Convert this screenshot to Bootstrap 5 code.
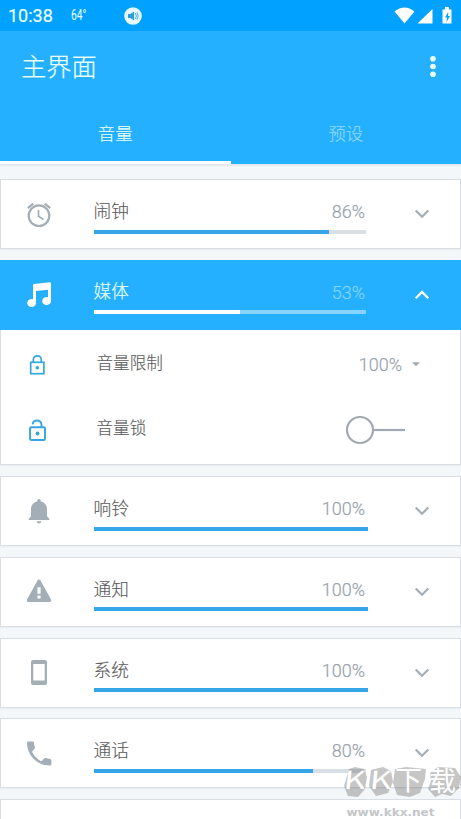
<!DOCTYPE html>
<html lang="zh-CN">
<head>
<meta charset="utf-8">
<meta name="viewport" content="width=device-width, initial-scale=1">
<title>主界面</title>
<link rel="stylesheet" href="https://cdn.jsdelivr.net/npm/bootstrap@5.3.0/dist/css/bootstrap.min.css">
<style>
body{font-family:Roboto,"Noto Sans CJK SC",sans-serif;background:#f3f7fa;color:#666;height:819px}
svg{display:block;flex:none}
.screen{height:819px}
.status-bar{height:31px;background:#00a1ff;color:#eaffff;padding:0 5px 0 8px}
.clock{font-size:18px;width:63px;font-weight:400;line-height:31px;-webkit-text-stroke:.2px}
.temp{font-size:15px;width:53px;line-height:31px}
.temp span{display:inline-block;transform:scaleX(.68);transform-origin:left}
.app-bar{height:133px;background:#25afff;color:#eaffff}
.title-row{height:72px;padding:0 24px 0 21px}
.page-title{font-size:25.3px;font-weight:300;line-height:36px;padding-top:2px;-webkit-text-stroke:.2px}
.tab-item{height:61px;font-size:17.5px;font-weight:300;line-height:63px;border-bottom:3px solid transparent;text-align:center;color:#93dcfd;-webkit-text-stroke:.15px}
.tab-item.on{color:#eaffff;border-color:#fff}
.tab-item span{display:block;height:58px}
.channels{padding-top:15px;gap:10.7px;box-shadow:inset 0 2px 1px #e3e9ee}
.panel{background:#fff;border:1px solid #d8dee3;border-width:1.5px 1px;box-shadow:0 1px 1px #e9eef1;flex:none}
.channel{height:70px;color:#a3aeb6}
.panel>.channel{margin:-1px -1px}
.icon-cell{width:93.5px;padding:1px 0 0 25px;flex:none}
.body-cell{width:272.5px;flex:none;padding-top:20px}
.caption{height:30.5px;line-height:25px}
.label{font-size:17.7px;font-weight:300;color:#5c5c5c;-webkit-text-stroke:.15px}
.caption .label{padding-top:1px}
.pct{font-size:18px;font-weight:300;color:#98a2aa;padding-right:1px;-webkit-text-stroke:.2px}
.track{height:4px;background:#d8dfe6}
.fill{height:4px;background:#36a5e8}
.chev{margin-left:48px}
.channel.active-row{background:#25afff;color:#fff}
.active-row .label{color:#eaffff;padding-top:0}
.active-row .pct{color:#83d6ff}
.active-row .track{background:#86d5ff}
.active-row .fill{background:#fff}
.options{padding:3.6px 0 2.2px}
.option{height:65px;padding-left:25px}
.option .label{font-size:16.6px;margin-left:48.5px;margin-top:-1px}
.lim{margin-left:auto;padding-right:10px}
.limit-caret{margin-right:40px}
.toggle{margin-left:auto;margin-right:54px}
.watermark{right:0;bottom:0;width:121px;height:64px}
</style>
<script src="https://cdn.jsdelivr.net/npm/bootstrap@5.3.0/dist/js/bootstrap.bundle.min.js"></script>
</head>
<body>
<div class="screen position-relative overflow-hidden d-flex flex-column">
  <div class="status-bar d-flex align-items-center flex-shrink-0">
    <span class="clock">10:38</span><span class="temp"><span>64°</span></span>
    <svg width="18" height="18" viewBox="0 0 18 18"><circle cx="9" cy="9" r="8.8" fill="#e4faff"/><path d="M4 7h2.500L10 4.500v9L6.500 11H4z" fill="#2b9ee0"/><path d="M11.400 6.200q2 2.800 0 5.600M13 5.200q2.400 3.800 0 7.600" fill="none" stroke="#4aafe4" stroke-width="1"/></svg>
    <svg class="ms-auto" width="62" height="20" viewBox="0 0 62 20" fill="#fff"><path d="M.5 5.500Q10.500-2.500 20.500 5.500L10.500 17.500z"/><path d="M23.500 17.500L38.500 3v14.500z"/><path d="M48.500 3.500h2.500V1h4v2.500h2.500V17.500h-9z"/><path d="M54.300 6l-3.300 5.500h2L52.500 16l3.500-6h-2z" fill="#00a1ff"/></svg>
  </div>
  <header class="app-bar flex-shrink-0">
    <div class="title-row d-flex align-items-center justify-content-between">
      <span class="page-title">主界面</span>
      <svg width="8" height="24" viewBox="0 0 8 24" fill="#eaffff"><circle cx="4" cy="3.700" r="2.800"/><circle cx="4" cy="11.500" r="2.800"/><circle cx="4" cy="19.300" r="2.800"/></svg>
    </div>
    <div class="row g-0">
      <div class="col-6 tab-item on"><span>音量</span></div>
      <div class="col-6 tab-item"><span>预设</span></div>
    </div>
  </header>
  <main class="channels d-flex flex-column">
    <section class="panel">
      <div class="channel d-flex align-items-center">
        <div class="icon-cell"><svg width="28" height="28" viewBox="0 0 28 28" fill="none" stroke="currentColor" stroke-width="2.200"><circle cx="14" cy="14.700" r="10.300"/><path d="M2.800 7.200L8.300 2.600M19.700 2.600L25.200 7.200"/><path d="M13.500 9v6.300l5 3.200" stroke-width="1.700"/></svg></div>
        <div class="body-cell align-self-start"><div class="caption d-flex justify-content-between"><span class="label">闹钟</span><span class="pct">86%</span></div><div class="track"><div class="fill" style="width:86.300%"></div></div></div>
        <svg class="chev" width="16" height="10" viewBox="0 0 16 10" fill="none" stroke="currentColor" stroke-width="2.200"><path d="M1.700 1.500L8 7.800l6.300-6.300"/></svg>
      </div>
    </section>
    <section class="panel">
      <div class="channel active-row d-flex align-items-center">
        <div class="icon-cell"><svg width="28" height="28" viewBox="0 0 28 28" fill="currentColor"><path d="M8 4.300Q8 3.200 9 3L24.500 1.300q1.500 0 1.500 1.300V20a4.400 4 0 1 1-3-3.700V8.700L11 9.900v12a4.400 4 0 1 1-3-3.700z"/></svg></div>
        <div class="body-cell align-self-start"><div class="caption d-flex justify-content-between"><span class="label">媒体</span><span class="pct">53%</span></div><div class="track"><div class="fill" style="width:53.700%"></div></div></div>
        <svg class="chev" width="16" height="10" viewBox="0 0 16 10" fill="none" stroke="currentColor" stroke-width="2.200"><path d="M1.700 8.200L8 1.900l6.300 6.300"/></svg>
      </div>
      <div class="options">
        <div class="option d-flex align-items-center">
          <svg width="22" height="24" viewBox="0 0 22 24" fill="none" stroke="#36a5e0" stroke-width="1.700"><rect x="4.700" y="9.300" width="13.200" height="11.400"/><path d="M7.300 9V6.800a4 4 0 0 1 8 0V9"/><circle cx="11.300" cy="14.800" r="1.800" fill="#36a5e0" stroke="none"/></svg>
          <span class="label">音量限制</span><span class="pct lim">100%</span>
          <svg class="limit-caret" width="8" height="5" viewBox="0 0 8 5"><path d="M0 .3h8L4 4.300z" fill="#a0a9b2"/></svg>
        </div>
        <div class="option d-flex align-items-center">
          <svg width="22" height="24" viewBox="0 0 22 24" fill="none" stroke="#36a5e0" stroke-width="1.900"><rect x="4" y="9.300" width="15" height="12.700" rx="1.300"/><path d="M6.600 6.300a4.500 4.500 0 0 1 8.900 0v3"/><circle cx="11.500" cy="15.500" r="1.900" fill="#36a5e0" stroke="none"/></svg>
          <span class="label">音量锁</span>
          <svg class="toggle" width="61" height="30" viewBox="0 0 61 30" fill="none" stroke="#a0a9b2" stroke-width="2.200"><circle cx="15" cy="15" r="13"/><path d="M28 15h32"/></svg>
        </div>
      </div>
    </section>
    <section class="panel">
      <div class="channel d-flex align-items-center">
        <div class="icon-cell"><svg width="28" height="28" viewBox="0 0 28 28" fill="currentColor"><path d="M14 1q1.800 0 1.900 2.400c4.200 1 6.100 4 6.100 8.100v6.800l2.300 2.500V22H3.700v-1.200L6 18.300v-6.800c0-4.100 1.900-7.100 6.100-8.100Q12.200 1 14 1zM11.700 23.300h4.600a2.300 2.200 0 0 1-4.600 0z"/></svg></div>
        <div class="body-cell align-self-start"><div class="caption d-flex justify-content-between"><span class="label">响铃</span><span class="pct">100%</span></div><div class="track"><div class="fill" style="width:100.600%"></div></div></div>
        <svg class="chev" width="16" height="10" viewBox="0 0 16 10" fill="none" stroke="currentColor" stroke-width="2.200"><path d="M1.700 1.500L8 7.800l6.300-6.300"/></svg>
      </div>
    </section>
    <section class="panel">
      <div class="channel d-flex align-items-center">
        <div class="icon-cell"><svg width="28" height="28" viewBox="0 0 28 28" fill="currentColor"><path d="M12.500 2.400q1.500-2 3 0L26 21.500q.7 2.500-1.500 2.500h-21Q1.300 24 2 21.500zM12.400 9.300v6.500h3.200V9.300zm0 8.300v3h3.200v-3z" fill-rule="evenodd"/></svg></div>
        <div class="body-cell align-self-start"><div class="caption d-flex justify-content-between"><span class="label">通知</span><span class="pct">100%</span></div><div class="track"><div class="fill" style="width:100.600%"></div></div></div>
        <svg class="chev" width="16" height="10" viewBox="0 0 16 10" fill="none" stroke="currentColor" stroke-width="2.200"><path d="M1.700 1.500L8 7.800l6.300-6.300"/></svg>
      </div>
    </section>
    <section class="panel">
      <div class="channel d-flex align-items-center">
        <div class="icon-cell"><svg width="28" height="28" viewBox="0 0 28 28" fill="currentColor"><path d="M8 1h12q2 0 2 2v21q0 2-2 2H8q-2 0-2-2V3q0-2 2-2zM8.300 5v16.500h11.400V5z" fill-rule="evenodd"/></svg></div>
        <div class="body-cell align-self-start"><div class="caption d-flex justify-content-between"><span class="label">系统</span><span class="pct">100%</span></div><div class="track"><div class="fill" style="width:100.600%"></div></div></div>
        <svg class="chev" width="16" height="10" viewBox="0 0 16 10" fill="none" stroke="currentColor" stroke-width="2.200"><path d="M1.700 1.500L8 7.800l6.300-6.300"/></svg>
      </div>
    </section>
    <section class="panel">
      <div class="channel d-flex align-items-center">
        <div class="icon-cell"><svg width="28" height="28" viewBox="0 0 28 28" fill="currentColor"><path d="M3.300 1.500h4.300q1.300 0 1.400 1.300.1 2.500.8 4.500.3.900-.3 1.500L6.900 11.700q3.200 6.500 9.500 9.500l2.800-2.800q.7-.6 1.500-.3 2 .7 4.400.8 1.300.1 1.300 1.300v4q0 1.400-1.300 1.400C12 25.600 2 15.500 2 2.800q0-1.300 1.300-1.300z"/></svg></div>
        <div class="body-cell align-self-start"><div class="caption d-flex justify-content-between"><span class="label">通话</span><span class="pct">80%</span></div><div class="track"><div class="fill" style="width:80.600%"></div></div></div>
        <svg class="chev" width="16" height="10" viewBox="0 0 16 10" fill="none" stroke="currentColor" stroke-width="2.200"><path d="M1.700 1.500L8 7.800l6.300-6.300"/></svg>
      </div>
    </section>
    <section class="panel"><div class="channel"></div></section>
  </main>
  <svg class="watermark position-absolute" viewBox="0 0 121 64">
    <g fill="#777" fill-opacity=".42"><path d="M9 14l6-2 9 2 3 8-2 12-7 8-10-1-4-10z"/><path d="M31 15l12-3 8 4 2 11-5 11-12 3-7-10z"/><path d="M55 14l11-2 20 2-1 10-5 14-10 4-13-2-4-12z"/><path d="M90 18l8-6 17 1 6 9-2 11-8 8-9-2-7 3-7-8 3-8z"/></g>
    <g fill="#fff" font-family="'Noto Sans CJK SC',sans-serif"><text transform="translate(3 34) skewX(-6) scale(1.350 1)" font-size="25" font-weight="400">K</text><text transform="translate(29 34) skewX(-6) scale(1.350 1)" font-size="25" font-weight="400">K</text><text x="55" y="35" font-size="27">下</text><text x="89" y="36" font-size="27">载</text></g>
    <text x="6.500" y="61" font-family="'DejaVu Sans',sans-serif" font-weight="700" font-size="10.500" textLength="88" lengthAdjust="spacingAndGlyphs" fill="#c3c6c8">www.kkx.net</text>
  </svg>
</div>
</body>
</html>
